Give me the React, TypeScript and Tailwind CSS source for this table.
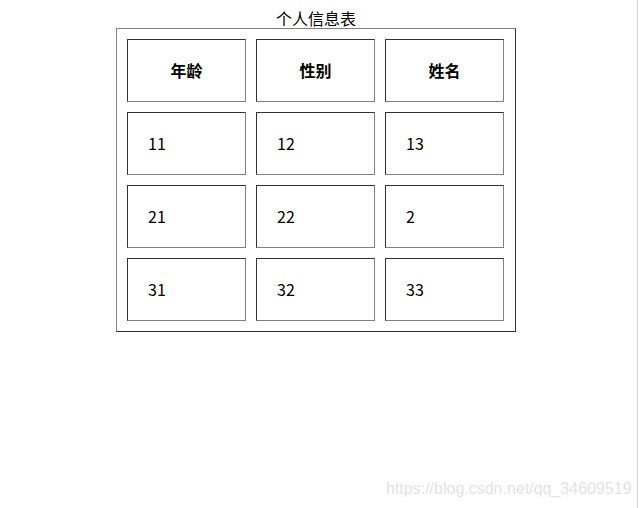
const headers = ["年龄", "性别", "姓名"]
const rows = [
  ["11", "12", "13"],
  ["21", "22", "2"],
  ["31", "32", "33"],
]

const cellBorder = "border border-t-[#333333] border-l-[#333333] border-r-[#808080] border-b-[#808080]"

export default function App() {
  return (
    <div className="relative h-[508px] w-[639px] overflow-hidden bg-white font-['Noto_Sans_CJK_SC',sans-serif] text-[16px] text-black">
      <div className="pl-[116px] pt-[8px]">
        <div className="w-[400px] text-center leading-[20px]">个人信息表</div>
        <div className="w-[400px] border border-t-[#808080] border-l-[#808080] border-r-[#333333] border-b-[#333333] py-[10px] pl-[10px] pr-[11px]">
          <div className="grid grid-cols-3 gap-[10px]">
            {headers.map((h) => (
              <div key={h} className={`${cellBorder} flex h-[63px] w-[119px] items-center justify-center pb-[1px] font-bold`}>
                {h}
              </div>
            ))}
            {rows.flat().map((v, i) => (
              <div key={i} className={`${cellBorder} flex h-[63px] w-[119px] items-center pb-[2px] pl-[20px]`}>
                {v}
              </div>
            ))}
          </div>
        </div>
      </div>

      {/* watermark */}
      <div className="absolute left-[386px] top-[477px] whitespace-nowrap font-['Liberation_Sans',Arial,sans-serif] text-[16px] leading-[24px] text-[#e3e3e3]">
        https://blog.csdn.net/qq_34609519
      </div>
      <div className="absolute right-[1px] top-0 h-full w-px bg-[#d6d6d6]" />
    </div>
  )
}
